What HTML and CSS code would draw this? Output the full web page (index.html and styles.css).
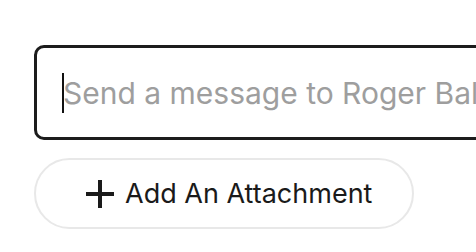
FILE: index.html
```html
<!DOCTYPE html>
<html>
<head>
<meta charset="utf-8">
<link rel="stylesheet" href="styles.css">
</head>
<body>
<div class="composer">
  <div class="message-box">
    <span class="caret"></span><span class="placeholder">Send a message to Roger Ballard</span>
  </div>
  <button class="attach-btn">
    <svg class="plus" width="28" height="28" viewBox="0 0 28 28"><path d="M14 0V28M0 14H28" stroke="#1a1a1a" stroke-width="4"/></svg>
    <span class="attach-label">Add An Attachment</span>
  </button>
</div>
</body>
</html>
```
FILE: styles.css
```css
html, body {
  margin: 0;
  padding: 0;
  background: #ffffff;
  overflow: hidden;
}
.composer {
  display: flex;
  flex-direction: column;
  align-items: flex-start;
  gap: 18px;
  padding: 45px 0 0 34px;
  font-family: Inter, "Liberation Sans", sans-serif;
}
.message-box {
  box-sizing: border-box;
  width: 520px;
  height: 95px;
  border: 3px solid #1c1c1c;
  border-radius: 10px;
  display: flex;
  align-items: center;
  padding-left: 25px;
  white-space: nowrap;
  overflow: hidden;
}
.caret {
  width: 2px;
  height: 40px;
  background: #111;
  flex: none;
}
.placeholder {
  font-size: 30px;
  color: #9e9e9e;
  margin-left: -1px;
}
.attach-btn {
  box-sizing: border-box;
  width: 380px;
  height: 71px;
  border: 2px solid #e8e8e8;
  border-radius: 36px;
  background: #fff;
  display: flex;
  align-items: center;
  padding: 0 0 0 50px;
  gap: 11px;
  font-family: inherit;
  cursor: pointer;
}
.plus {
  flex: none;
}
.attach-label {
  font-size: 27px;
  color: #1a1a1a;
}
```
